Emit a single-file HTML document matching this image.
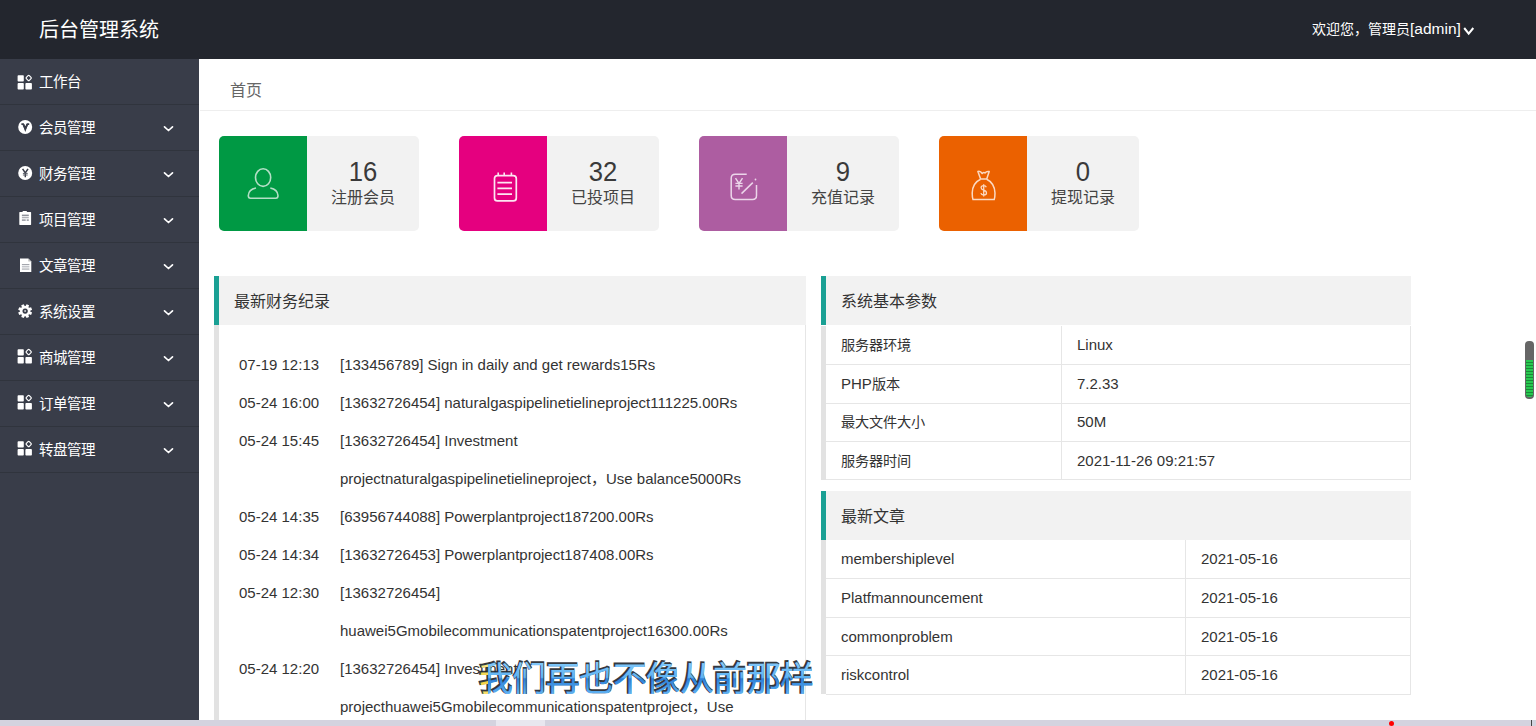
<!DOCTYPE html>
<html lang="zh-CN"><head><meta charset="utf-8">
<style>
*{margin:0;padding:0;box-sizing:border-box}
html,body{width:1536px;height:726px;overflow:hidden;background:#fff;font-family:"Liberation Sans",sans-serif;color:#333}
body{position:relative}
.abs{position:absolute}
#hdr{left:0;top:0;width:1536px;height:59px;background:#23262e}
#logo{left:39px;top:17px;font-size:20px;color:#fff;line-height:26px;white-space:nowrap}
#user{left:1312px;top:19px;font-size:15px;color:#fff;line-height:20px;white-space:nowrap}
#side{left:0;top:59px;width:199px;height:667px;background:#393d49}
.sitem{position:absolute;left:0;width:199px;height:46px;border-bottom:1px solid #30343d}
.sitem .t{position:absolute;left:39px;top:13px;font-size:14.5px;line-height:20px;color:#fff;white-space:nowrap}
.sitem svg.ic{position:absolute;left:18px;top:16px}
.sitem svg.ch{position:absolute;left:163px;top:20px}
#crumb{left:230px;top:81px;font-size:16px;color:#666;line-height:20px}
#crumbline{left:200px;top:110px;width:1336px;height:1px;background:#eee}
.card{position:absolute;top:136px;width:200px;height:95px;background:#f2f2f2;border-radius:5px;overflow:hidden}
.card .ib{position:absolute;left:0;top:0;width:88px;height:95px}
.card .ib svg{position:absolute;left:24px;top:27px}
.card .num{position:absolute;left:88px;width:112px;top:22px;text-align:center;font-size:27px;line-height:28px;color:#3a3a3a;transform:scaleX(0.95)}
.card .lab{position:absolute;left:88px;width:112px;top:52px;text-align:center;font-size:16px;line-height:20px;color:#444}
.ph{position:absolute;height:49px;background:#f2f2f2;border-left:5px solid #1aa094}
.ph .t{position:absolute;left:15px;top:16px;font-size:16px;line-height:20px;color:#333}
.fd{position:absolute;left:239px;font-size:15px;line-height:20px;color:#333;white-space:nowrap}
.ft{position:absolute;left:340px;font-size:15px;line-height:20px;color:#333;white-space:nowrap}
.tc{position:absolute;font-size:15px;line-height:20px;color:#333;white-space:nowrap}
.tc i{font-style:normal;font-size:14.2px}
.hl{position:absolute;height:1px;background:#e6e6e6}
.vl{position:absolute;width:1px;background:#e6e6e6}
.gb{position:absolute;width:5px;background:#e2e2e2}
#sub{left:478px;top:652px;font-size:34px;line-height:48px;white-space:nowrap;font-weight:bold;letter-spacing:0px}
#strip{left:0;top:720px;width:1536px;height:6px;background:#d4d3df}
</style></head><body>
<div id="hdr" class="abs"></div>
<div id="logo" class="abs">后台管理系统</div>
<div id="user" class="abs"><span style="font-size:14px">欢迎您，管理员</span><span style="font-size:15.5px">[admin]</span></div>
<svg class="abs" style="left:1462px;top:25px" width="14" height="12" viewBox="0 0 14 12"><path d="M2.2 3 L6.7 8.6 L11.3 3" fill="none" stroke="#fff" stroke-width="2"/></svg>

<div id="side" class="abs"></div>
<div class="sitem" style="top:59px"><svg class="ic" style="top:16px;overflow:visible" width="16" height="16" viewBox="0 0 16 16"><rect x="-0.4" y="0.2" width="6.2" height="6.4" rx="0.8" fill="#fff"/><rect x="-0.4" y="8.1" width="6.2" height="6.5" rx="0.8" fill="#fff"/><rect x="7.4" y="8.1" width="6.5" height="6.5" rx="0.8" fill="#fff"/><rect x="8.6" y="0.9" width="4.2" height="4.2" rx="0.9" transform="rotate(45 10.7 3.0)" fill="none" stroke="#fff" stroke-width="1.2"/></svg><div class="t">工作台</div></div>
<div class="sitem" style="top:105px"><svg class="ic" style="top:15.4px" width="16" height="16" viewBox="0 0 16 16"><circle cx="7.2" cy="7" r="7" fill="#fff"/><path d="M3.4 4.1 H5.2 L7.3 8.6 L9.4 4.1 H11.2" fill="none" stroke="#393d49" stroke-width="1.9" stroke-linejoin="miter"/><path d="M5.4 4.2 L7.3 9.6 L9.2 4.2" fill="none" stroke="#393d49" stroke-width="1.6"/></svg><div class="t">会员管理</div><svg class="ch" width="12" height="8" viewBox="0 0 12 8"><path d="M1.5 1.8 L5.5 5.5 L9.5 1.8" fill="none" stroke="#fff" stroke-width="1.7" stroke-linecap="round" stroke-linejoin="round"/></svg></div>
<div class="sitem" style="top:151px"><svg class="ic" style="top:15px" width="16" height="16" viewBox="0 0 16 16"><circle cx="7.2" cy="7" r="7" fill="#fff"/><path d="M4.6 2.9 L7.3 7 L10 2.9" fill="none" stroke="#393d49" stroke-width="1.5"/><path d="M7.3 7 V11.3" fill="none" stroke="#393d49" stroke-width="1.4"/><path d="M4.9 7.4 H9.7 M4.9 9 H9.7" fill="none" stroke="#5a5e68" stroke-width="1.0"/></svg><div class="t">财务管理</div><svg class="ch" width="12" height="8" viewBox="0 0 12 8"><path d="M1.5 1.8 L5.5 5.5 L9.5 1.8" fill="none" stroke="#fff" stroke-width="1.7" stroke-linecap="round" stroke-linejoin="round"/></svg></div>
<div class="sitem" style="top:197px"><svg class="ic" style="top:13px" width="16" height="16" viewBox="0 0 16 16"><path d="M1.3 2.4 Q1.3 1.9 1.8 1.9 L4.3 1.9 L5 1 L8.5 1 L9.2 1.9 L12.6 1.9 Q13.1 1.9 13.1 2.4 L13.1 14.6 Q13.1 15 12.6 15 L1.8 15 Q1.3 15 1.3 14.6 Z" fill="#fff"/><rect x="3.9" y="4.6" width="6.9" height="1.6" fill="#8e919a"/><rect x="3.9" y="7.3" width="6.9" height="0.9" fill="#8e919a"/><rect x="3.9" y="9.4" width="3.8" height="1.4" fill="#8e919a"/><rect x="8.7" y="9.4" width="2.1" height="1.4" fill="#8e919a"/></svg><div class="t">项目管理</div><svg class="ch" width="12" height="8" viewBox="0 0 12 8"><path d="M1.5 1.8 L5.5 5.5 L9.5 1.8" fill="none" stroke="#fff" stroke-width="1.7" stroke-linecap="round" stroke-linejoin="round"/></svg></div>
<div class="sitem" style="top:243px"><svg class="ic" style="top:15px" width="16" height="16" viewBox="0 0 16 16"><path d="M2 0.5 L10.3 0.5 L13.3 3.5 L13.3 14 L2 14 Z" fill="#fff"/><path d="M10.3 0.6 L10.3 3.5 L13.2 3.5" fill="#bbb"/><rect x="3.9" y="6.2" width="7.5" height="0.9" fill="#8e919a"/><rect x="3.9" y="7.9" width="7.5" height="1.6" fill="#c4c6cb"/><rect x="3.9" y="10.6" width="7.5" height="0.9" fill="#8e919a"/></svg><div class="t">文章管理</div><svg class="ch" width="12" height="8" viewBox="0 0 12 8"><path d="M1.5 1.8 L5.5 5.5 L9.5 1.8" fill="none" stroke="#fff" stroke-width="1.7" stroke-linecap="round" stroke-linejoin="round"/></svg></div>
<div class="sitem" style="top:289px"><svg class="ic" style="top:15px" width="16" height="16" viewBox="0 0 16 16"><g transform="translate(7.15 7.1)"><path fill="#fff" fill-rule="evenodd" d="M0.47 -5.08 L1.43 -6.95 L3.91 -5.93 L3.26 -3.92 L3.92 -3.26 L5.93 -3.91 L6.95 -1.43 L5.08 -0.47 L5.08 0.47 L6.95 1.43 L5.93 3.91 L3.92 3.26 L3.26 3.92 L3.91 5.93 L1.43 6.95 L0.47 5.08 L-0.47 5.08 L-1.43 6.95 L-3.91 5.93 L-3.26 3.92 L-3.92 3.26 L-5.93 3.91 L-6.95 1.43 L-5.08 0.47 L-5.08 -0.47 L-6.95 -1.43 L-5.93 -3.91 L-3.92 -3.26 L-3.26 -3.92 L-3.91 -5.93 L-1.43 -6.95 L-0.47 -5.08 Z M0 -2.7 A2.7 2.7 0 1 0 0.01 -2.7 Z"/><circle r="1.0" fill="#c8cace"/></g></svg><div class="t">系统设置</div><svg class="ch" width="12" height="8" viewBox="0 0 12 8"><path d="M1.5 1.8 L5.5 5.5 L9.5 1.8" fill="none" stroke="#fff" stroke-width="1.7" stroke-linecap="round" stroke-linejoin="round"/></svg></div>
<div class="sitem" style="top:335px"><svg class="ic" style="top:14px;overflow:visible" width="16" height="16" viewBox="0 0 16 16"><rect x="-0.4" y="0.2" width="6.2" height="6.4" rx="0.8" fill="#fff"/><rect x="-0.4" y="8.1" width="6.2" height="6.5" rx="0.8" fill="#fff"/><rect x="7.4" y="8.1" width="6.5" height="6.5" rx="0.8" fill="#fff"/><rect x="8.6" y="0.9" width="4.2" height="4.2" rx="0.9" transform="rotate(45 10.7 3.0)" fill="none" stroke="#fff" stroke-width="1.2"/></svg><div class="t">商城管理</div><svg class="ch" width="12" height="8" viewBox="0 0 12 8"><path d="M1.5 1.8 L5.5 5.5 L9.5 1.8" fill="none" stroke="#fff" stroke-width="1.7" stroke-linecap="round" stroke-linejoin="round"/></svg></div>
<div class="sitem" style="top:381px"><svg class="ic" style="top:14px;overflow:visible" width="16" height="16" viewBox="0 0 16 16"><rect x="-0.4" y="0.2" width="6.2" height="6.4" rx="0.8" fill="#fff"/><rect x="-0.4" y="8.1" width="6.2" height="6.5" rx="0.8" fill="#fff"/><rect x="7.4" y="8.1" width="6.5" height="6.5" rx="0.8" fill="#fff"/><rect x="8.6" y="0.9" width="4.2" height="4.2" rx="0.9" transform="rotate(45 10.7 3.0)" fill="none" stroke="#fff" stroke-width="1.2"/></svg><div class="t">订单管理</div><svg class="ch" width="12" height="8" viewBox="0 0 12 8"><path d="M1.5 1.8 L5.5 5.5 L9.5 1.8" fill="none" stroke="#fff" stroke-width="1.7" stroke-linecap="round" stroke-linejoin="round"/></svg></div>
<div class="sitem" style="top:427px"><svg class="ic" style="top:14px;overflow:visible" width="16" height="16" viewBox="0 0 16 16"><rect x="-0.4" y="0.2" width="6.2" height="6.4" rx="0.8" fill="#fff"/><rect x="-0.4" y="8.1" width="6.2" height="6.5" rx="0.8" fill="#fff"/><rect x="7.4" y="8.1" width="6.5" height="6.5" rx="0.8" fill="#fff"/><rect x="8.6" y="0.9" width="4.2" height="4.2" rx="0.9" transform="rotate(45 10.7 3.0)" fill="none" stroke="#fff" stroke-width="1.2"/></svg><div class="t">转盘管理</div><svg class="ch" width="12" height="8" viewBox="0 0 12 8"><path d="M1.5 1.8 L5.5 5.5 L9.5 1.8" fill="none" stroke="#fff" stroke-width="1.7" stroke-linecap="round" stroke-linejoin="round"/></svg></div>

<div id="crumb" class="abs">首页</div>
<div id="crumbline" class="abs"></div>

<div class="card" style="left:219px"><div class="ib" style="background:#009944">
<svg width="40" height="40" viewBox="0 0 40 40" style="left:24px;top:27px"><ellipse cx="20.1" cy="14.6" rx="7.6" ry="8.8" fill="none" stroke="#b3dfc6" stroke-width="1.6"/><path d="M13 25 Q5.6 26.5 5.3 32.5 Q5.3 35.2 7.5 35.2 L32.8 35.2 Q35 35.2 35 32.5 Q34.6 26.5 27.3 25" fill="none" stroke="#b3dfc6" stroke-width="1.6"/></svg>
</div><div class="num">16</div><div class="lab">注册会员</div></div>
<div class="card" style="left:459px"><div class="ib" style="background:#e5007f">
<svg width="40" height="40" viewBox="0 0 40 40" style="left:24px;top:27px"><rect x="11.5" y="12.6" width="21.8" height="25.3" rx="3" fill="none" stroke="#fde6f2" stroke-width="1.7"/><path d="M15.2 9.6 V12.5 M21.2 9.6 V12.5 M28.4 9.6 V12.5" stroke="#fde6f2" stroke-width="1.6"/><path d="M14.4 19.6 H29 M14.4 25.3 H29 M14.4 31.1 H29" stroke="#fde6f2" stroke-width="1.7"/></svg>
</div><div class="num">32</div><div class="lab">已投项目</div></div>
<div class="card" style="left:699px"><div class="ib" style="background:#ad5da1">
<svg width="40" height="40" viewBox="0 0 40 40" style="left:24px;top:27px"><path d="M23.7 11.3 H12.2 Q8.2 11.3 8.2 15.3 V32.6 Q8.2 36.6 12.2 36.6 H29.5 Q33.5 36.6 33.5 32.6 V22" fill="none" stroke="#ecd6ea" stroke-width="1.5"/><circle cx="32.5" cy="16.5" r="0.9" fill="#ecd6ea"/><path d="M18.5 30.6 L29.8 19.6" stroke="#ecd6ea" stroke-width="1.5"/><path d="M12.5 15.2 L16 20.4 L19.5 15.2 M16 20.4 V26.4 M12.4 20.4 H19.6 M12.4 23 H19.6" fill="none" stroke="#ecd6ea" stroke-width="1.4"/></svg>
</div><div class="num">9</div><div class="lab">充值记录</div></div>
<div class="card" style="left:939px"><div class="ib" style="background:#eb6100">
<svg width="40" height="40" viewBox="0 0 40 40" style="left:24px;top:27px"><path d="M14.9 8.5 Q17.5 7.8 19.2 10.5 Q20.8 9 22 10 Q23.5 8 26.2 8.6 L23.7 16 L17.6 16 Z" fill="none" stroke="#fbd9c2" stroke-width="1.5" stroke-linejoin="round"/><path d="M17.6 16.2 Q9.4 20 9.2 30 Q9.2 34 10 36.6 L31.2 36.6 Q32 34 32 30 Q31.6 20 23.7 16.2" fill="none" stroke="#fbd9c2" stroke-width="1.5"/><path d="M23.3 24.2 Q22.8 22.6 20.7 22.6 Q18.1 22.6 18.1 24.6 Q18.1 26.4 20.6 27.2 Q23.5 28 23.5 30 Q23.5 32 20.7 32 Q18.4 32 17.9 30.2 M20.7 21.3 V33.6" fill="none" stroke="#fbd9c2" stroke-width="1.3"/></svg>
</div><div class="num">0</div><div class="lab">提现记录</div></div>

<div class="ph" style="left:214px;top:276px;width:592px"><div class="t">最新财务纪录</div></div>
<div class="gb" style="left:214px;top:325px;height:401px"></div>
<div class="vl" style="left:805px;top:325px;height:401px"></div>
<div class="fd" style="top:355.2px">07-19 12:13</div>
<div class="ft" style="top:355.2px">[133456789] Sign in daily and get rewards15Rs</div>
<div class="fd" style="top:393.2px">05-24 16:00</div>
<div class="ft" style="top:393.2px">[13632726454] naturalgaspipelinetielineproject111225.00Rs</div>
<div class="fd" style="top:431.2px">05-24 15:45</div>
<div class="ft" style="top:431.2px">[13632726454] Investment</div>
<div class="ft" style="top:469.2px">projectnaturalgaspipelinetielineproject，Use balance5000Rs</div>
<div class="fd" style="top:507.2px">05-24 14:35</div>
<div class="ft" style="top:507.2px">[63956744088] Powerplantproject187200.00Rs</div>
<div class="fd" style="top:545.2px">05-24 14:34</div>
<div class="ft" style="top:545.2px">[13632726453] Powerplantproject187408.00Rs</div>
<div class="fd" style="top:583.2px">05-24 12:30</div>
<div class="ft" style="top:583.2px">[13632726454]</div>
<div class="ft" style="top:621.2px">huawei5Gmobilecommunicationspatentproject16300.00Rs</div>
<div class="fd" style="top:659.2px">05-24 12:20</div>
<div class="ft" style="top:659.2px">[13632726454] Investment</div>
<div class="ft" style="top:697.2px">projecthuawei5Gmobilecommunicationspatentproject，Use</div>

<div class="ph" style="left:821px;top:276px;width:590px"><div class="t">系统基本参数</div></div>
<div class="tc" style="top:335.0px;left:841px"><i>服务器环境</i></div>
<div class="tc" style="top:335.0px;left:1077px">Linux</div>
<div class="hl" style="top:364.0px;left:826px;width:585px"></div>
<div class="tc" style="top:373.8px;left:841px">PHP<i>版本</i></div>
<div class="tc" style="top:373.8px;left:1077px">7.2.33</div>
<div class="hl" style="top:402.5px;left:826px;width:585px"></div>
<div class="tc" style="top:412.2px;left:841px"><i>最大文件大小</i></div>
<div class="tc" style="top:412.2px;left:1077px">50M</div>
<div class="hl" style="top:441.0px;left:826px;width:585px"></div>
<div class="tc" style="top:450.5px;left:841px"><i>服务器时间</i></div>
<div class="tc" style="top:450.5px;left:1077px">2021-11-26 09:21:57</div>
<div class="hl" style="top:479.0px;left:826px;width:585px"></div>
<div class="vl" style="top:325.5px;left:1061px;height:154.0px"></div>
<div class="vl" style="top:325.5px;left:1410px;height:154.0px"></div>
<div class="gb" style="top:325.5px;left:821px;height:154.5px"></div>
<div class="ph" style="left:821px;top:491px;width:590px"><div class="t">最新文章</div></div>
<div class="tc" style="top:549.3px;left:841px">membershiplevel</div>
<div class="tc" style="top:549.3px;left:1201px">2021-05-16</div>
<div class="hl" style="top:578.3px;left:826px;width:585px"></div>
<div class="tc" style="top:588.1px;left:841px">Platfmannouncement</div>
<div class="tc" style="top:588.1px;left:1201px">2021-05-16</div>
<div class="hl" style="top:617.0px;left:826px;width:585px"></div>
<div class="tc" style="top:626.6px;left:841px">commonproblem</div>
<div class="tc" style="top:626.6px;left:1201px">2021-05-16</div>
<div class="hl" style="top:655.3px;left:826px;width:585px"></div>
<div class="tc" style="top:664.9px;left:841px">riskcontrol</div>
<div class="tc" style="top:664.9px;left:1201px">2021-05-16</div>
<div class="hl" style="top:693.5px;left:826px;width:585px"></div>
<div class="vl" style="top:539.8px;left:1185px;height:154.20000000000005px"></div>
<div class="vl" style="top:539.8px;left:1410px;height:154.20000000000005px"></div>
<div class="gb" style="top:539.8px;left:821px;height:154.70000000000005px"></div>

<svg class="abs" style="left:460px;top:640px" width="380" height="70" viewBox="0 0 380 70"><defs>
<linearGradient id="bg" x1="0" y1="0" x2="0" y2="1"><stop offset="0" stop-color="#86cbfb"/><stop offset="0.46" stop-color="#5eb2f2"/><stop offset="0.5" stop-color="#2d80d8"/><stop offset="0.75" stop-color="#4a9fe8"/><stop offset="1" stop-color="#74c2fb"/></linearGradient>
<linearGradient id="yg" x1="0" y1="0" x2="0" y2="1"><stop offset="0" stop-color="#fff3a0"/><stop offset="0.5" stop-color="#f1cf3a"/><stop offset="1" stop-color="#fbe37a"/></linearGradient>
<clipPath id="yc"><rect x="0" y="0" width="28" height="70"/></clipPath><clipPath id="bc"><rect x="28" y="0" width="360" height="70"/></clipPath></defs>
<g font-family="Liberation Sans, sans-serif" font-size="34">
<text x="18.2" y="50" fill="#1c242c" stroke="#1c242c" stroke-width="1.6" opacity="0.9" textLength="335" lengthAdjust="spacing">我们再也不像从前那样</text>
<text x="19" y="50.9" fill="url(#bg)" clip-path="url(#bc)" textLength="335" lengthAdjust="spacing">我们再也不像从前那样</text>
<text x="19" y="50.9" fill="url(#yg)" clip-path="url(#yc)" textLength="335" lengthAdjust="spacing">我们再也不像从前那样</text>
</g></svg>
<div id="strip" class="abs"></div>
<div class="abs" style="left:496px;top:720px;width:49px;height:6px;background:#e8e7ef"></div>
<div class="abs" style="left:1389px;top:721px;width:5px;height:5px;border-radius:50%;background:#f00"></div>
<div class="abs" style="left:1531px;top:720px;width:1px;height:6px;background:#444"></div>

<div class="abs" style="left:1525px;top:341px;width:9px;height:58px;border-radius:4px;background:#666"></div>
<div class="abs" style="left:1526px;top:360px;width:7px;height:37px;border-radius:0 0 3px 3px;background:repeating-linear-gradient(#28c850 0 2px,#1a8a38 2px 3px)"></div>
</body></html>
